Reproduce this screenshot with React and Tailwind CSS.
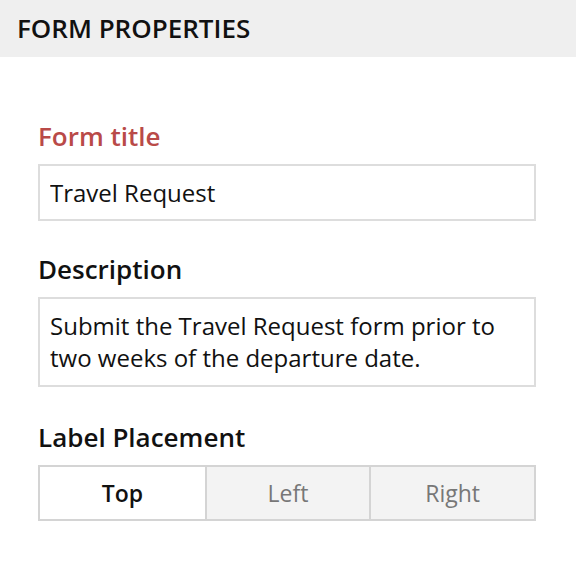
import React, { useState } from 'react';

const font = { fontFamily: '"Open Sans", "Noto Sans", sans-serif' };

const Label = ({ children, error }) => (
    <div className={`text-[26px] leading-[30px] font-semibold mb-[13px] ${error ? 'text-[#b94a48]' : 'text-[#111]'}`}>
        {children}
    </div>
);

export default function App() {
    const [title, setTitle] = useState('Travel Request');
    const [placement, setPlacement] = useState('Top');
    const options = ['Top', 'Left', 'Right'];

    return (
        <div className="w-[576px] h-[564px] bg-white" style={font}>
            {/* Header */}
            <div className="h-[57px] bg-[#efefef] flex items-center pl-[17px]">
                <h2 className="text-[26px] font-semibold text-[#111]">FORM PROPERTIES</h2>
            </div>

            <div className="pt-[64px] pl-[38px] pr-[40px]">
                <Label error>Form title</Label>
                <input
                    value={title}
                    onChange={(e) => setTitle(e.target.value)}
                    className="w-full h-[57px] border-2 border-[#dddddd] px-[10px] text-[24px] text-[#111] outline-none"
                />

                <div className="mt-[33px]">
                    <Label>Description</Label>
                    <div className="border-2 border-[#dddddd] px-[10px] py-[11px] text-[24px] leading-[32px] text-[#111]">
                        Submit the Travel Request form prior to two weeks of the departure date.
                    </div>
                </div>

                <div className="mt-[35px]">
                    <Label>Label Placement</Label>
                    <div className="grid grid-cols-3 border-2 border-[#d4d4d4] h-[56px]">
                        {options.map((opt, i) => (
                            <button
                                key={opt}
                                onClick={() => setPlacement(opt)}
                                className={`flex items-center justify-center text-[23px] ${i > 0 ? 'border-l-2 border-[#d4d4d4]' : ''} ${placement === opt ? 'bg-white text-[#111] font-semibold' : 'bg-[#f3f3f3] text-[#777]'}`}
                            >
                                {opt}
                            </button>
                        ))}
                    </div>
                </div>
            </div>
        </div>
    );
}
